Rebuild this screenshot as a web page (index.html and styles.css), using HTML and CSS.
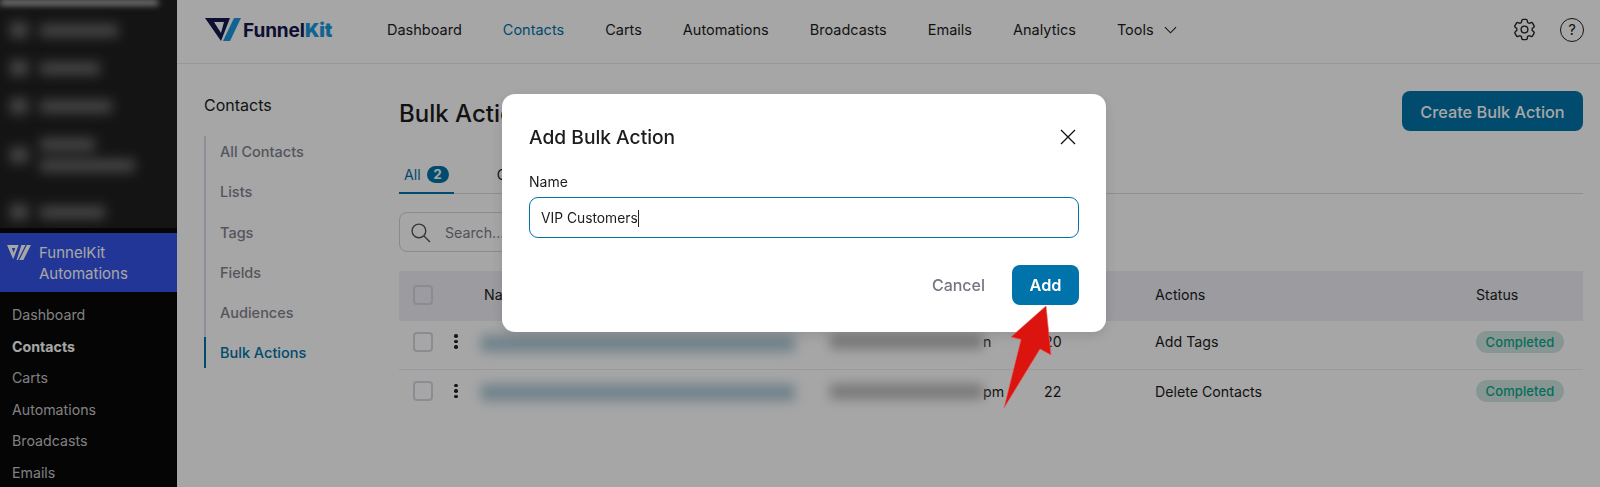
FILE: index.html
```html
<!DOCTYPE html>
<html lang="en">
<head>
  <meta charset="UTF-8" />
  <meta name="viewport" content="width=device-width, initial-scale=1.0"/>
  <title>Bulk Actions</title>
  <link rel="stylesheet" href="styles.css">
</head>
<body>
<div class="app">

  <aside class="sidebar">
    <div class="wp-blur">
      <div class="blur-strip"></div>
      <div class="blur-row"><i class="blur-icon"></i><i class="blur-text w78"></i></div>
      <div class="blur-row"><i class="blur-icon"></i><i class="blur-text w60"></i></div>
      <div class="blur-row"><i class="blur-icon"></i><i class="blur-text w72"></i></div>
      <div class="blur-row tall"><i class="blur-icon"></i><div class="blur-lines"><i class="blur-text w55"></i><i class="blur-text w95"></i></div></div>
      <div class="blur-row"><i class="blur-icon"></i><i class="blur-text w65"></i></div>
    </div>
    <div class="plugin-item">
      <svg class="plugin-logo" viewBox="0 0 35 22" width="24" height="15">
        <path d="M0 0h17l-8 21z M7 4.500l2.500 7 2.500-7z" fill-rule="evenodd" fill="#fff"/>
        <path d="M21 0h6l-11 22h-2z M29 0h6l-11 22h-6z" fill="#fff"/>
      </svg>
      <span class="plugin-name">FunnelKit<br>Automations</span>
    </div>
    <ul class="wp-menu">
      <li>Dashboard</li>
      <li class="current">Contacts</li>
      <li>Carts</li>
      <li>Automations</li>
      <li>Broadcasts</li>
      <li>Emails</li>
    </ul>
  </aside>

  <div class="main">
    <header class="topbar">
      <div class="brand">
        <svg class="brand-mark" viewBox="0 0 36 23" width="36" height="23">
          <path d="M0 0h25l-9 23z M9 4l7 11 3-11z" fill-rule="evenodd" fill="#15174f"/>
          <path d="M29 0h7L25 23h-7z" fill="#1b9ae0"/>
        </svg>
        <span class="brand-name">Funnel<b>Kit</b></span>
      </div>
      <nav class="topnav">
        <a>Dashboard</a>
        <a class="active">Contacts</a>
        <a>Carts</a>
        <a>Automations</a>
        <a>Broadcasts</a>
        <a>Emails</a>
        <a>Analytics</a>
        <a class="has-caret">Tools
          <svg viewBox="0 0 14 8" width="13" height="8"><path d="M1 1l6 6 6-6" fill="none" stroke="#222" stroke-width="1.200"/></svg>
        </a>
      </nav>
      <div class="top-icons">
        <svg viewBox="0 0 24 24" width="27" height="27" fill="none" stroke="#222" stroke-width="1.200">
          <path d="M9.594 3.940c.09-.542.56-.94 1.110-.94h2.593c.55 0 1.020.398 1.110.94l.213 1.281c.063.374.313.686.645.87.074.04.147.083.22.127.325.196.72.257 1.075.124l1.217-.456a1.125 1.125 0 0 1 1.370.49l1.296 2.247a1.125 1.125 0 0 1-.26 1.431l-1.003.827c-.293.241-.438.613-.43.992a7.723 7.723 0 0 1 0 .255c-.008.378.137.75.43.991l1.004.827c.424.35.534.955.26 1.430l-1.298 2.247a1.125 1.125 0 0 1-1.369.491l-1.217-.456c-.355-.133-.75-.072-1.076.124a6.470 6.470 0 0 1-.22.128c-.331.183-.581.495-.644.869l-.213 1.281c-.09.543-.56.94-1.110.94h-2.594c-.55 0-1.019-.398-1.110-.94l-.213-1.281c-.062-.374-.312-.686-.644-.87a6.520 6.520 0 0 1-.22-.127c-.325-.196-.72-.257-1.076-.124l-1.217.456a1.125 1.125 0 0 1-1.369-.49l-1.297-2.247a1.125 1.125 0 0 1 .26-1.431l1.004-.827c.292-.24.437-.613.43-.991a6.932 6.932 0 0 1 0-.255c.007-.38-.138-.751-.43-.992l-1.004-.827a1.125 1.125 0 0 1-.26-1.430l1.297-2.247a1.125 1.125 0 0 1 1.370-.491l1.216.456c.356.133.751.072 1.076-.124.072-.044.146-.086.22-.128.332-.183.582-.495.644-.869l.214-1.280Z"/>
          <circle cx="12" cy="12" r="3"/>
        </svg>
        <span class="help-icon">?</span>
      </div>
    </header>

    <div class="content">
      <div class="subnav">
        <h2>Contacts</h2>
        <ul>
          <li>All Contacts</li>
          <li>Lists</li>
          <li>Tags</li>
          <li>Fields</li>
          <li>Audiences</li>
          <li class="active">Bulk Actions</li>
        </ul>
      </div>

      <section class="panel">
        <div class="panel-head">
          <h1>Bulk Actions</h1>
          <button class="btn-primary wide">Create Bulk Action</button>
        </div>

        <div class="tabs">
          <span class="tab active">All <em class="badge">2</em></span>
          <span class="tab">C</span>
        </div>

        <div class="search">
          <svg viewBox="0 0 20 20" width="21" height="21" fill="none" stroke="#555" stroke-width="1.300">
            <circle cx="8.500" cy="8.500" r="6.500"/><path d="M13.300 13.300l5.700 5.700"/>
          </svg>
          <span>Search...</span>
        </div>

        <div class="table">
          <div class="t-row t-head">
            <div class="t-first"><i class="check"></i></div>
            <div>Name</div>
            <div></div>
            <div></div>
            <div>Actions</div>
            <div>Status</div>
          </div>
          <div class="t-row">
            <div class="t-first"><i class="check"></i><span class="dots"><i></i><i></i><i></i></span></div>
            <div><i class="blur-name"></i></div>
            <div class="t-date"><i class="blur-date"></i>n</div>
            <div>20</div>
            <div>Add Tags</div>
            <div><span class="pill">Completed</span></div>
          </div>
          <div class="t-row">
            <div class="t-first"><i class="check"></i><span class="dots"><i></i><i></i><i></i></span></div>
            <div><i class="blur-name"></i></div>
            <div class="t-date"><i class="blur-date"></i>pm</div>
            <div>22</div>
            <div>Delete Contacts</div>
            <div><span class="pill">Completed</span></div>
          </div>
        </div>
      </section>
    </div>
  </div>
</div>

<div class="backdrop"></div>

<div class="modal">
  <div class="modal-head">
    <h3>Add Bulk Action</h3>
    <svg viewBox="0 0 16 16" width="16" height="16"><path d="M1 1l14 14M15 1L1 15" stroke="#111" stroke-width="1.300" fill="none"/></svg>
  </div>
  <label class="field-label">Name</label>
  <div class="field">VIP Customers<i class="caret"></i></div>
  <div class="modal-foot">
    <span class="cancel">Cancel</span>
    <button class="btn-primary add">Add</button>
  </div>
</div>

<svg class="arrow" viewBox="0 0 56 110" width="56" height="110">
  <path d="M46 3L11 34l10 2.500L4 105l36-59 11 6z" fill="#dc1410" stroke="#e8605c" stroke-width=".6"/>
</svg>

</body>
</html>
```
FILE: styles.css
```css
/* Reset */
* {
  margin: 0;
  padding: 0;
  box-sizing: border-box;
}

html, body {
  height: 100%;
  overflow: hidden;
  font-family: Inter, "Liberation Sans", sans-serif;
  font-size: 14.200px;
  background: #fff;
  color: #1c1c1c;
}

ul {
  list-style: none;
}

i, em {
  font-style: normal;
}

.app {
  display: flex;
  height: 100vh;
}

/* WordPress sidebar */
.sidebar {
  flex: 0 0 177px;
  background: #080808;
  overflow: hidden;
}

.wp-blur {
  height: 228px;
  background: #202020;
  overflow: hidden;
}

.blur-strip {
  width: 158px;
  height: 5px;
  background: #ddd;
  margin-bottom: 6px;
  filter: blur(3px);
}

.blur-row {
  display: flex;
  align-items: center;
  gap: 12px;
  height: 38px;
  padding-left: 10px;
  filter: blur(6px);
}

.blur-row.tall {
  height: 60px;
  margin-bottom: 8px;
}

.blur-lines {
  display: flex;
  flex-direction: column;
  gap: 8px;
}

.blur-icon {
  width: 18px;
  height: 16px;
  background: #6a6a6a;
}

.blur-text {
  display: block;
  height: 13px;
  background: #6a6a6a;
}

.w55 { width: 55px; }
.w60 { width: 60px; }
.w65 { width: 65px; }
.w72 { width: 72px; }
.w78 { width: 78px; }
.w95 { width: 95px; }

.plugin-item {
  display: flex;
  align-items: flex-start;
  gap: 8px;
  margin-top: 5px;
  height: 59px;
  padding: 10px 0 0 7px;
  background: #3453e7;
  color: #fff;
  font-size: 15px;
  line-height: 20.500px;
}

.plugin-logo {
  margin-top: 2px;
}

.wp-menu {
  padding-top: 7px;
}

.wp-menu li {
  height: 31.600px;
  line-height: 32px;
  padding-left: 12px;
  color: #c6c6c6;
}

.wp-menu .current {
  color: #fff;
  font-weight: 700;
}

/* Top bar */
.main {
  flex: 1;
  min-width: 0;
  background: #fff;
}

.topbar {
  display: flex;
  align-items: center;
  height: 64px;
  padding: 0 16px 4px 28px;
  border-bottom: 1px solid #eaeaea;
}

.brand {
  display: flex;
  align-items: center;
  gap: 2px;
  width: 182px;
}

.brand-name {
  font-size: 19px;
  font-weight: 700;
  letter-spacing: -0.100px;
  color: #15174f;
  margin-top: 2px;
}

.brand-name b {
  color: #1b9ae0;
}

.topnav {
  display: flex;
  align-items: center;
  gap: 41px;
  font-size: 14.500px;
}

.topnav a {
  color: #1c1c1c;
  line-height: 20px;
}

.topnav .active {
  color: #0073aa;
}

.has-caret {
  display: flex;
  align-items: center;
  gap: 10px;
}

.top-icons {
  display: flex;
  align-items: center;
  gap: 22px;
  margin-left: auto;
}

.help-icon {
  display: block;
  width: 24px;
  height: 24px;
  line-height: 21px;
  border: 1.500px solid #222;
  border-radius: 50%;
  text-align: center;
  font-size: 15px;
}

/* Content */
.content {
  display: flex;
  padding: 0 17px 0 27px;
}

.subnav {
  flex: 0 0 195px;
  padding-top: 31px;
}

.subnav h2 {
  font-size: 16px;
  font-weight: 400;
  line-height: 20px;
}

.subnav ul {
  display: flex;
  flex-direction: column;
  gap: 9.250px;
  width: 150px;
  margin-top: 21px;
  border-left: 2px solid #dadbe6;
}

.subnav li {
  height: 31px;
  line-height: 32px;
  margin-left: -2px;
  padding-left: 14px;
  border-left: 2px solid transparent;
  color: #83838f;
  font-size: 14.500px;
  font-weight: 500;
}

.subnav .active {
  color: #0073aa;
  border-left-color: #0073aa;
}

.panel {
  flex: 1;
  min-width: 0;
  padding-top: 27px;
}

.panel-head {
  display: flex;
  align-items: center;
  justify-content: space-between;
}

.panel-head h1 {
  font-size: 24px;
  font-weight: 500;
  margin-top: 4px;
}

.btn-primary {
  height: 40px;
  border: none;
  border-radius: 8px;
  background: #0073aa;
  color: #fff;
  font: 500 16.300px Inter, "Liberation Sans", sans-serif;
}

.wide {
  width: 181px;
  padding-top: 1px;
}

.tabs {
  display: flex;
  gap: 38px;
  margin-top: 33px;
  border-bottom: 1px solid #dcdcdc;
}

.tab {
  display: flex;
  align-items: center;
  gap: 6px;
  height: 30px;
  margin-bottom: -1px;
  padding: 0 5px 7px;
  border-bottom: 2px solid transparent;
}

.tab.active {
  color: #0073aa;
  border-bottom-color: #0073aa;
}

.badge {
  display: block;
  width: 22px;
  height: 17px;
  line-height: 17px;
  border-radius: 9px;
  background: #0073aa;
  color: #fff;
  text-align: center;
  font-size: 13px;
  font-weight: 700;
}

.search {
  display: flex;
  align-items: center;
  gap: 14px;
  width: 320px;
  height: 40px;
  margin-top: 18px;
  padding-left: 10px;
  border: 1px solid #d5d5dc;
  border-radius: 8px;
  color: #7d7d86;
}

/* Table */
.table {
  margin-top: 19px;
}

.t-row {
  display: grid;
  grid-template-columns: 85px 346px 214px 111px 321px 107px;
  align-items: center;
  height: 49px;
  padding-bottom: 7px;
  border-bottom: 1px solid #ededf0;
}

.t-row:last-child {
  border-bottom: none;
}

.t-head {
  height: 50px;
  padding-bottom: 3px;
  background: #eeeef6;
  border-bottom: none;
}

.t-first {
  display: flex;
  align-items: center;
  padding-left: 14px;
}

.check {
  display: block;
  width: 20px;
  height: 20px;
  border: 2px solid #d6d6e0;
  border-radius: 4px;
}

.dots {
  display: flex;
  flex-direction: column;
  gap: 2px;
  margin-left: 21px;
}

.dots i {
  width: 3.600px;
  height: 3.600px;
  border-radius: 50%;
  background: #222;
}

.blur-name {
  display: block;
  width: 314px;
  height: 17px;
  margin: 3px 0 0 -3px;
  background: #adc8d6;
  filter: blur(6px);
}

.t-date {
  display: flex;
  align-items: center;
}

.blur-date {
  display: block;
  width: 153px;
  height: 15px;
  background: #b8b8b8;
  filter: blur(6px);
}

.pill {
  display: inline-block;
  width: 88px;
  height: 22px;
  line-height: 22px;
  border-radius: 11px;
  background: #d0e6e0;
  color: #0ba88a;
  font-size: 13px;
  font-weight: 500;
  letter-spacing: 0.100px;
  text-align: center;
}

/* Modal */
.backdrop {
  position: fixed;
  inset: 0;
  background: rgba(0, 0, 0, 0.35);
}

.modal {
  position: fixed;
  left: 502px;
  top: 94px;
  width: 604px;
  height: 238px;
  padding: 0 27px;
  background: #fff;
  border-radius: 13px;
  box-shadow: 0 4px 14px rgba(0, 0, 0, 0.12);
}

.modal-head {
  display: flex;
  align-items: center;
  justify-content: space-between;
  height: 62px;
  padding-top: 24px;
}

.modal-head h3 {
  font-size: 19.200px;
  font-weight: 500;
}

.modal-head svg {
  margin-right: 3px;
}

.field-label {
  display: block;
  margin-top: 16px;
  font-size: 14px;
  line-height: 20px;
}

.field {
  height: 41px;
  margin-top: 5px;
  padding-left: 11px;
  font-size: 13.800px;
  line-height: 40px;
  border: 1px solid #0073aa;
  border-radius: 9px;
}

.caret {
  display: inline-block;
  width: 1px;
  height: 17px;
  vertical-align: -4px;
  background: #222;
}

.modal-foot {
  display: flex;
  align-items: center;
  justify-content: flex-end;
  gap: 27px;
  margin-top: 27px;
}

.cancel {
  font-size: 16px;
  font-weight: 500;
  color: #767684;
}

.add {
  width: 67px;
  font-weight: 600;
}

/* Annotation arrow */
.arrow {
  position: fixed;
  left: 1000px;
  top: 303px;
}
```
